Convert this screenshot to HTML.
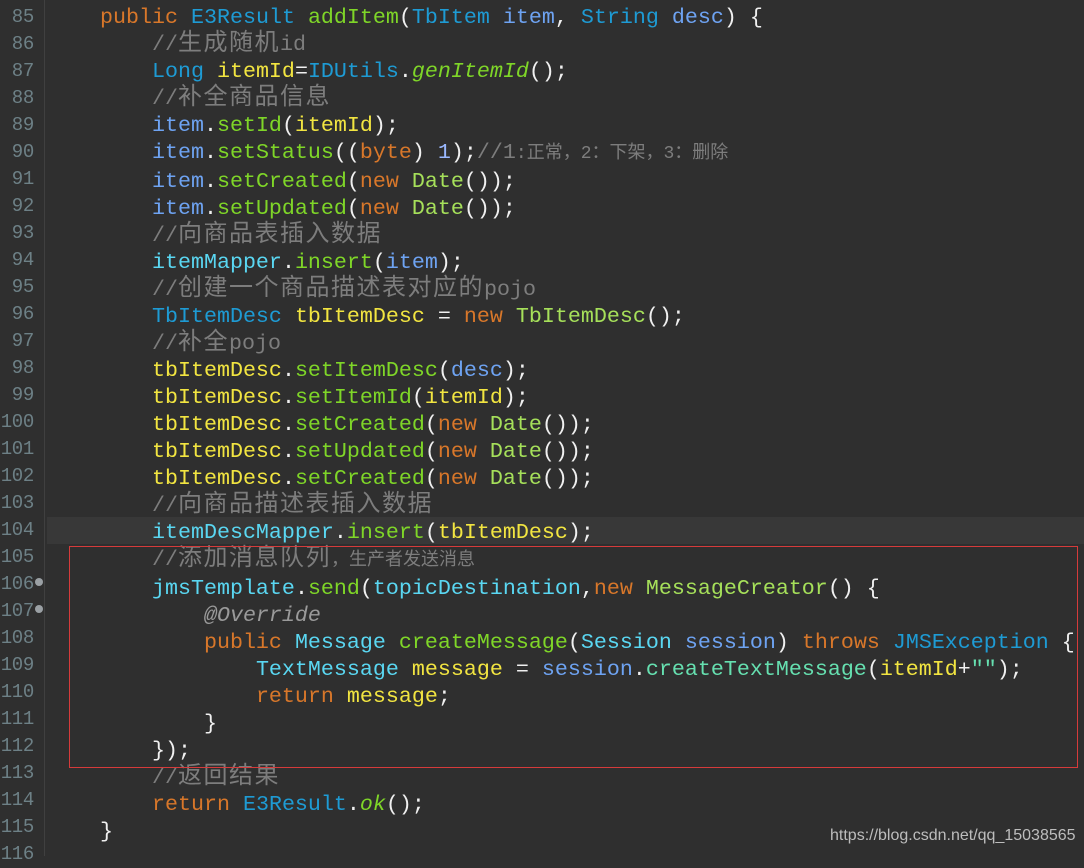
<!DOCTYPE html>
<html><head><meta charset="utf-8"><style>
body{margin:0;width:1084px;height:856px;background:#2f2f2f;overflow:hidden;position:relative;font-family:"Liberation Mono","Noto Sans CJK SC",monospace;font-size:21.67px}
.g{position:absolute;left:0;top:0;width:44px;height:856px;border-right:1px solid #404040;background:#2f2f2f}
.hl{position:absolute;left:47px;top:517px;width:1037px;height:27px;background:#383838}
.ln{position:absolute;left:0;width:34px;text-align:right;color:#6d8086;line-height:27px;white-space:pre;font-size:19px;letter-spacing:-0.3px}
.c{position:absolute;left:48px;line-height:27px;white-space:pre;color:#f0f0f0}
.k{color:#d8772a}.t{color:#1e9bd4}.m{color:#7fd628}.mi{color:#7fd628;font-style:italic}.v{color:#6ea3f2}.y{color:#f2e541}.f{color:#5ad7f2}.cm{color:#7d7d7d}.s{color:#66e0b0}.cs{font-size:18px}.n{color:#9ab8ff}.gn{color:#a6e05a}.an{color:#9a9a9a;font-style:italic}
.z{font-size:24px;letter-spacing:1.5px;line-height:20px}
.box{position:absolute;left:69px;top:546px;width:1007px;height:220px;border:1px solid #d63b3b}
.dot{position:absolute;left:35px;width:8px;height:8px;border-radius:50%;background:#9aa0a4}
.wm{position:absolute;left:830px;top:827px;font-family:"Liberation Sans",sans-serif;font-size:16px;color:#bdbdbd}
</style></head><body>
<div class="g"></div>
<div class="hl"></div>
<div class="ln" style="top:4px">85
86
87
88
89
90
91
92
93
94
95
96
97
98
99
100
101
102
103
104
105
106
107
108
109
110
111
112
113
114
115
116</div>
<div class="dot" style="top:578px"></div>
<div class="dot" style="top:605px"></div>
<div class="c" style="top:4px">    <span class="k">public</span> <span class="t">E3Result</span> <span class="m">addItem</span>(<span class="t">TbItem</span> <span class="v">item</span>, <span class="t">String</span> <span class="v">desc</span>) {
        <span class="cm">//<span class="z">生成随机</span>id</span>
        <span class="t">Long</span> <span class="y">itemId</span>=<span class="t">IDUtils</span>.<span class="mi">genItemId</span>();
        <span class="cm">//<span class="z">补全商品信息</span></span>
        <span class="v">item</span>.<span class="m">setId</span>(<span class="y">itemId</span>);
        <span class="v">item</span>.<span class="m">setStatus</span>((<span class="k">byte</span>) <span class="n">1</span>);<span class="cm">//1<span class="cs">:正常，2：下架，3：删除</span></span>
        <span class="v">item</span>.<span class="m">setCreated</span>(<span class="k">new</span> <span class="gn">Date</span>());
        <span class="v">item</span>.<span class="m">setUpdated</span>(<span class="k">new</span> <span class="gn">Date</span>());
        <span class="cm">//<span class="z">向商品表插入数据</span></span>
        <span class="f">itemMapper</span>.<span class="m">insert</span>(<span class="v">item</span>);
        <span class="cm">//<span class="z">创建一个商品描述表对应的</span>pojo</span>
        <span class="t">TbItemDesc</span> <span class="y">tbItemDesc</span> = <span class="k">new</span> <span class="gn">TbItemDesc</span>();
        <span class="cm">//<span class="z">补全</span>pojo</span>
        <span class="y">tbItemDesc</span>.<span class="m">setItemDesc</span>(<span class="v">desc</span>);
        <span class="y">tbItemDesc</span>.<span class="m">setItemId</span>(<span class="y">itemId</span>);
        <span class="y">tbItemDesc</span>.<span class="m">setCreated</span>(<span class="k">new</span> <span class="gn">Date</span>());
        <span class="y">tbItemDesc</span>.<span class="m">setUpdated</span>(<span class="k">new</span> <span class="gn">Date</span>());
        <span class="y">tbItemDesc</span>.<span class="m">setCreated</span>(<span class="k">new</span> <span class="gn">Date</span>());
        <span class="cm">//<span class="z">向商品描述表插入数据</span></span>
        <span class="f">itemDescMapper</span>.<span class="m">insert</span>(<span class="y">tbItemDesc</span>);
        <span class="cm">//<span class="z">添加消息队列</span><span class="cs">，生产者发送消息</span></span>
        <span class="f">jmsTemplate</span>.<span class="m">send</span>(<span class="f">topicDestination</span>,<span class="k">new</span> <span class="gn">MessageCreator</span>() {
            <span class="an">@Override</span>
            <span class="k">public</span> <span class="f">Message</span> <span class="m">createMessage</span>(<span class="f">Session</span> <span class="v">session</span>) <span class="k">throws</span> <span class="t">JMSException</span> {
                <span class="f">TextMessage</span> <span class="y">message</span> = <span class="v">session</span>.<span class="s">createTextMessage</span>(<span class="y">itemId</span>+<span class="s">""</span>);
                <span class="k">return</span> <span class="y">message</span>;
            }
        });
        <span class="cm">//<span class="z">返回结果</span></span>
        <span class="k">return</span> <span class="t">E3Result</span>.<span class="mi">ok</span>();
    }</div>
<div class="box"></div>
<div class="wm">https://blog.csdn.net/qq_15038565</div>
</body></html>
